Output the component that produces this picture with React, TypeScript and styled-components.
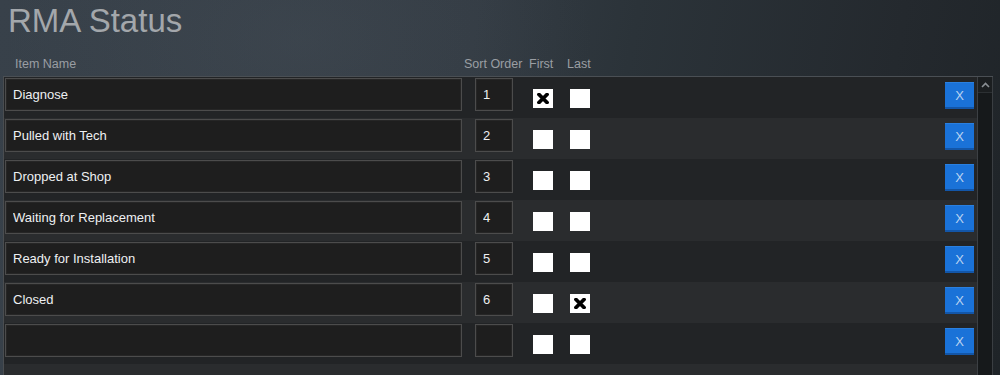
import React from "react";
import styled, { createGlobalStyle } from "styled-components";

const GlobalStyle = createGlobalStyle`
  html, body {
    margin: 0;
    padding: 0;
    height: 100%;
    overflow: hidden;
  }
  body {
    font-family: "Liberation Sans", Arial, sans-serif;
    background:
      radial-gradient(ellipse 420px 260px at 300px 40px, rgba(90, 100, 110, 0.18), transparent 70%),
      linear-gradient(100deg, #38414a 0%, #333b43 45%, #2b3339 60%, #24292e 85%, #1f2428 100%);
    color: #ddd;
  }
`;

type Status = { name: string; order: string; first: boolean; last: boolean };

const statuses: Status[] = [
  { name: "Diagnose", order: "1", first: true, last: false },
  { name: "Pulled with Tech", order: "2", first: false, last: false },
  { name: "Dropped at Shop", order: "3", first: false, last: false },
  { name: "Waiting for Replacement", order: "4", first: false, last: false },
  { name: "Ready for Installation", order: "5", first: false, last: false },
  { name: "Closed", order: "6", first: false, last: true },
  { name: "", order: "", first: false, last: false },
];

function Cross() {
  return (
    <svg width="12" height="11" viewBox="0 0 12 11">
      <path d="M2 1.5 L10 9.5 M10 1.5 L2 9.5" stroke="#000" strokeWidth="3.8" strokeLinecap="round" />
    </svg>
  );
}

function Checkbox({ checked, gap }: { checked: boolean; gap: number }) {
  return <Check $gap={gap}>{checked && <Cross />}</Check>;
}

export default function App() {
  return (
    <Page>
      <GlobalStyle />
      <Title>RMA Status</Title>
      <HeaderRow>
        <HeadCell $width={464} $left={15}>Item Name</HeadCell>
        <HeadCell $width={65} $left={0}>Sort Order</HeadCell>
        <HeadCell $width={38} $left={0}>First</HeadCell>
        <HeadCell $width={40} $left={0}>Last</HeadCell>
      </HeaderRow>
      <Panel>
        <Rows>
          {statuses.map((s, i) => (
            <Row key={i} $alt={i % 2 === 1}>
              <NameInput readOnly value={s.name} />
              <OrderInput readOnly value={s.order} />
              <Checkbox checked={s.first} gap={20} />
              <Checkbox checked={s.last} gap={17} />
              <RemoveButton>X</RemoveButton>
            </Row>
          ))}
          <Row $alt />
        </Rows>
        <Scrollbar>
          <ScrollUp>
            <svg width="9" height="6" viewBox="0 0 9 6">
              <path d="M1 5 L4.5 1.5 L8 5" stroke="#8a8f94" strokeWidth="1.6" fill="none" />
            </svg>
          </ScrollUp>
        </Scrollbar>
      </Panel>
    </Page>
  );
}

const Page = styled.div`
  width: 1000px;
  height: 375px;
  overflow: hidden;
`;

const Title = styled.h1`
  margin: 0;
  padding: 2px 0 0 8px;
  height: 40px;
  box-sizing: border-box;
  font-size: 33px;
  line-height: 38px;
  font-weight: normal;
  color: #a3a7ab;
`;

const HeaderRow = styled.div`
  display: flex;
  height: 36px;
  align-items: flex-start;
  padding-top: 17px;
  box-sizing: border-box;
`;

const HeadCell = styled.div<{ $width: number; $left: number }>`
  box-sizing: border-box;
  width: ${(p) => p.$width}px;
  padding-left: ${(p) => p.$left}px;
  font-size: 12.5px;
  line-height: 14px;
  color: #9a9ea3;
  flex-shrink: 0;
  white-space: nowrap;
`;

const Panel = styled.div`
  display: flex;
  margin-left: 3px;
  width: 990px;
  border-top: 1px solid #4a4f54;
  height: 300px;
`;

const Rows = styled.div`
  flex: 1;
  border-left: 1px solid #4a4d50;
  background: #27292b;
`;

const Row = styled.div<{ $alt?: boolean }>`
  display: flex;
  align-items: flex-start;
  height: 41px;
  background: ${(p) => (p.$alt ? "#2a2c2e" : "#222426")};
`;

const Field = styled.input`
  box-sizing: border-box;
  height: 33px;
  margin-top: 1px;
  background: #1e1e1e;
  border: 1px solid #4c4c4c;
  box-shadow: inset 0 0 0 1px #262626;
  color: #eef0f2;
  font-family: "Liberation Sans", Arial, sans-serif;
  font-size: 13px;
  outline: none;
`;

const NameInput = styled(Field)`
  width: 457px;
  margin-left: 1px;
  padding: 0 0 0 7px;
`;

const OrderInput = styled(Field)`
  width: 38px;
  margin-left: 13px;
  padding: 0 0 0 7px;
`;

const Check = styled.div<{ $gap: number }>`
  box-sizing: border-box;
  width: 20px;
  height: 19px;
  margin-top: 12px;
  margin-left: ${(p) => p.$gap}px;
  background: #ffffff;
  display: flex;
  align-items: center;
  justify-content: center;
`;

const RemoveButton = styled.button`
  box-sizing: border-box;
  width: 29px;
  height: 27px;
  margin: 5px 3px 0 auto;
  padding: 0;
  border: none;
  border-top: 1px solid #2a80e0;
  border-bottom: 2px solid #1356a8;
  background: #1a72d8;
  color: #b9d3f1;
  font-family: "Liberation Sans", Arial, sans-serif;
  font-size: 13px;
`;

const Scrollbar = styled.div`
  width: 16px;
  border-left: 1px solid #3c4044;
  border-right: 1px solid #3a3e42;
  background: #16191b;
  box-sizing: border-box;
`;

const ScrollUp = styled.div`
  height: 15px;
  background: #1b1e20;
  border-bottom: 1px solid #2c3033;
  display: flex;
  align-items: center;
  justify-content: center;
`;
